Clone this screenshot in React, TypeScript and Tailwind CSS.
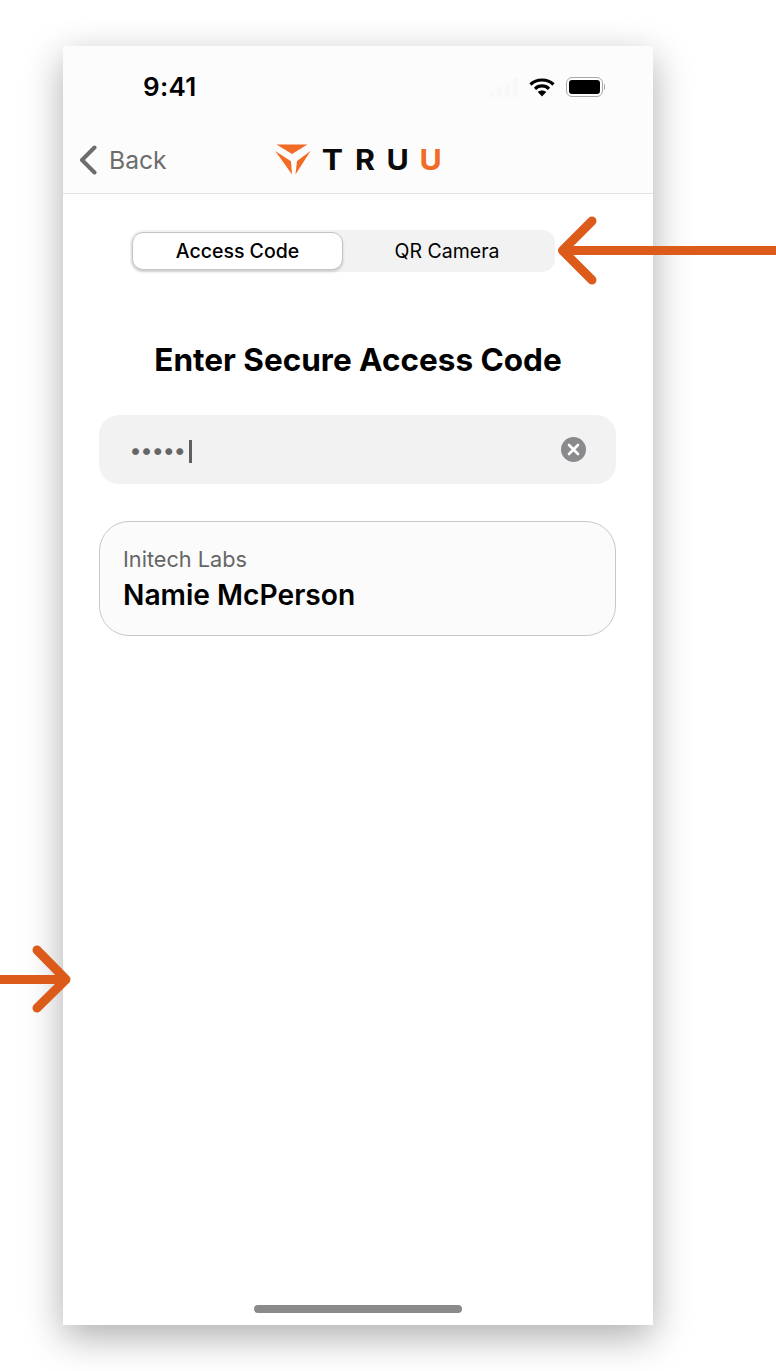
function TruuMark() {
  return (
    <svg width="36" height="32" viewBox="0 0 36 32" className="shrink-0">
      <polygon points="1.5,0.5 32.5,0.5 17,10" fill="#f26b26" />
      <polygon points="0.3,7 16,17.3 17,30.5" fill="#f26b26" />
      <polygon points="35.5,7 22,17 20.5,30.5" fill="#f26b26" />
    </svg>
  );
}

function WifiIcon() {
  return (
    <svg width="26" height="20" viewBox="0 0 26 20" fill="none">
      <path d="M1.5 7.5C7.5 1.5 18.5 1.5 24.5 7.5" stroke="#000" strokeWidth="3.2" />
      <path d="M6 11.8C10 8 16 8 20 11.8" stroke="#000" strokeWidth="3.2" />
      <path d="M13 19.5L8.8 15C11 13 15 13 17.2 15Z" fill="#000" />
    </svg>
  );
}

function StatusBar() {
  return (
    <div className="flex h-[82px] items-center justify-between pl-[80px] pr-[48px]">
      <span className="text-[26px] font-semibold leading-none tracking-[0.3px] text-black">9:41</span>
      <div className="flex items-center gap-[11px]">
        <div className="flex h-[19px] items-end gap-[3px]">
          <div className="h-[6px] w-[5px] bg-[#f8f8f8]" />
          <div className="h-[10px] w-[5px] bg-[#f8f8f8]" />
          <div className="h-[14px] w-[5px] bg-[#f8f8f8]" />
          <div className="h-[19px] w-[5px] bg-[#f8f8f8]" />
        </div>
        <WifiIcon />
        <div className="flex items-center gap-[1px]">
          <div className="h-[20px] w-[37px] rounded-[6px] border-[1.5px] border-[#a8a8a8] p-[2px]">
            <div className="h-full w-full rounded-[3px] bg-black" />
          </div>
          <div className="h-[6px] w-[1.5px] rounded-r-full bg-[#a8a8a8]" />
        </div>
      </div>
    </div>
  );
}

function NavBar() {
  return (
    <div className="relative flex h-[66px] items-center justify-center border-b border-[#e2e2e2] pb-[2px]">
      <button className="absolute left-[16px] top-[17px] flex items-center gap-[12px] text-[#6d6d6d]">
        <svg width="18" height="30" viewBox="0 0 18 30" fill="none">
          <path d="M15.5 2.5L3 15L15.5 27.5" stroke="#6d6d6d" strokeWidth="4" strokeLinecap="round" strokeLinejoin="round" />
        </svg>
        <span className="text-[24.7px] leading-none">Back</span>
      </button>
      <div className="flex items-center">
        <TruuMark />
        <div className="ml-[11px] flex text-[29px] font-bold leading-none text-[#0a0a0a]">
          <span className="w-[21px] scale-x-110 text-center">T</span>
          <span className="ml-[12px] w-[20px] scale-x-105 text-center">R</span>
          <span className="ml-[12px] w-[21px] scale-x-105 text-center">U</span>
          <span className="ml-[12px] w-[21px] scale-x-105 text-center text-[#f26b26]">U</span>
        </div>
      </div>
    </div>
  );
}

function SegmentedControl() {
  return (
    <div className="ml-[67px] mt-[36px] flex h-[42px] w-[425px] items-center rounded-[13px] bg-[#f2f2f2] p-[2px] text-[19.5px] text-black">
      <div className="flex h-[38px] w-[211px] items-center justify-center rounded-[11px] border border-[#c4c4c4] bg-white pt-[1px] font-medium shadow-[0_2px_3px_rgba(0,0,0,0.15)]">
        Access Code
      </div>
      <div className="flex flex-1 items-center justify-center pt-[2px] pr-[2px]">QR Camera</div>
    </div>
  );
}

export default function App() {
  return (
    <div className="relative h-[1371px] w-[776px] overflow-hidden bg-white font-['Inter',sans-serif]">
      <div className="ml-[63px] mt-[46px] flex h-[1279px] w-[590px] flex-col bg-white shadow-[0_12px_36px_rgba(0,0,0,0.32)]">
        <div className="bg-[#fcfcfc]">
          <StatusBar />
          <NavBar />
        </div>
        <SegmentedControl />
        <h1 className="mt-[70px] text-center text-[31.5px] font-bold leading-[36px] text-black">
          Enter Secure Access Code
        </h1>
        <div className="ml-[36px] mr-[37px] mt-[37px] flex h-[69px] items-center justify-between rounded-[20px] bg-[#f2f2f2] pl-[31px] pr-[30px]">
          <div className="flex items-center text-[#666666]">
            <span className="text-[22px] font-semibold leading-none">•••••</span>
            <div className="ml-[4px] mt-[4px] h-[23px] w-[3px] bg-[#5f5f5f]" />
          </div>
          <svg width="25" height="25" viewBox="0 0 25 25">
            <circle cx="12.5" cy="12.5" r="12.5" fill="#8a8a8e" />
            <path d="M8 8L17 17M17 8L8 17" stroke="#fff" strokeWidth="2.6" strokeLinecap="round" />
          </svg>
        </div>
        <div className="ml-[36px] mr-[37px] mt-[37px] flex h-[115px] flex-col justify-center rounded-[30px] border-[1.5px] border-[#c8c8c8] bg-[#fbfbfb] pl-[23px]">
          <div className="text-[21.7px] leading-[26px] text-[#666666]">Initech Labs</div>
          <div className="mt-[6px] text-[28.2px] font-semibold leading-[34px] text-black">Namie McPerson</div>
        </div>
        <div className="mb-[12px] mt-auto h-[8px] w-[208px] self-center rounded-full bg-[#8a8a8a]" />
      </div>

      <svg className="absolute left-[555px] top-[215px]" width="221" height="71" viewBox="0 0 221 71" fill="none">
        <path d="M221 35.5H9" stroke="#dc5a1a" strokeWidth="9" />
        <path d="M37 6L7.5 35.5L37 65" stroke="#dc5a1a" strokeWidth="9" strokeLinecap="round" strokeLinejoin="round" />
      </svg>
      <svg className="absolute left-0 top-[944px]" width="76" height="70" viewBox="0 0 76 70" fill="none">
        <path d="M0 35.5H66" stroke="#dc5a1a" strokeWidth="9" />
        <path d="M37 6L66 35.5L37 64" stroke="#dc5a1a" strokeWidth="9" strokeLinecap="round" strokeLinejoin="round" />
      </svg>
    </div>
  );
}
